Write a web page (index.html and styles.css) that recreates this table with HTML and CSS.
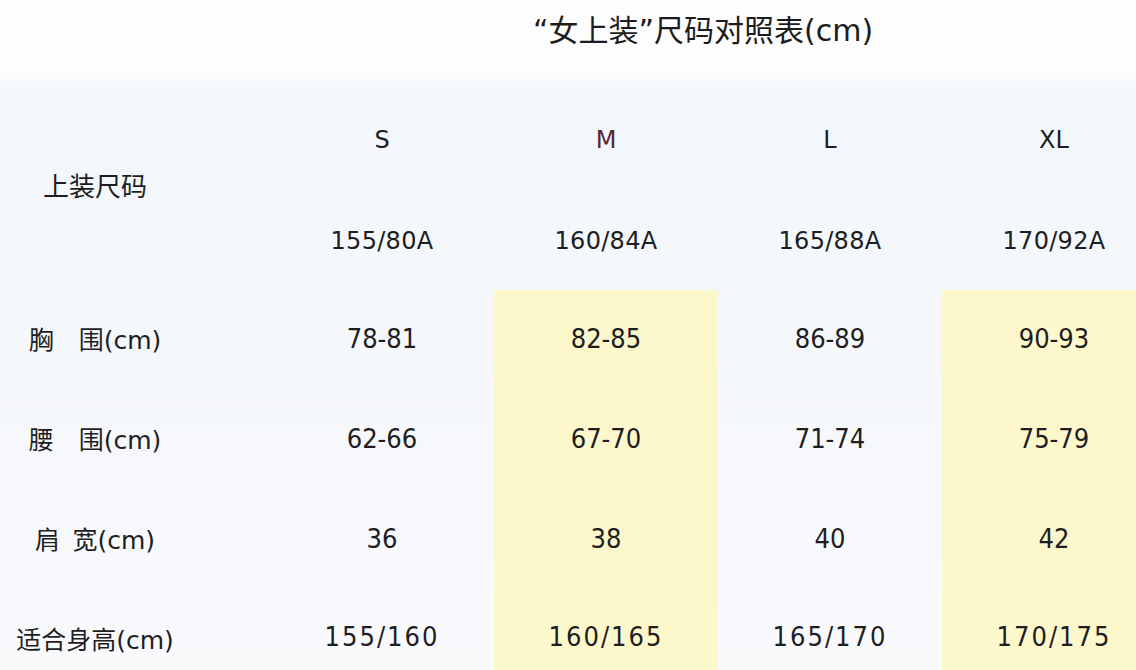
FILE: index.html
```html
<!DOCTYPE html>
<html lang="zh-CN">
<head>
<meta charset="utf-8">
<title>女上装尺码对照表</title>
<link rel="stylesheet" href="styles.css">
</head>
<body>
<div class="page">
  <header class="title-bar">
    <h1 class="title">“女上装”尺码对照表(cm)</h1>
  </header>
  <section class="chart">
    <div class="cell label label-head">上装尺码</div>
    <div class="cell size">S</div>
    <div class="cell size size-m">M</div>
    <div class="cell size">L</div>
    <div class="cell size">XL</div>
    <div class="cell spec">155/80A</div>
    <div class="cell spec">160/84A</div>
    <div class="cell spec">165/88A</div>
    <div class="cell spec">170/92A</div>

    <div class="cell label">胸　围(cm)</div>
    <div class="cell num">78-81</div>
    <div class="cell num hl">82-85</div>
    <div class="cell num">86-89</div>
    <div class="cell num hl">90-93</div>

    <div class="cell label">腰　围(cm)</div>
    <div class="cell num">62-66</div>
    <div class="cell num hl">67-70</div>
    <div class="cell num">71-74</div>
    <div class="cell num hl">75-79</div>

    <div class="cell label">肩&#8194;宽(cm)</div>
    <div class="cell num">36</div>
    <div class="cell num hl">38</div>
    <div class="cell num">40</div>
    <div class="cell num hl">42</div>

    <div class="cell label">适合身高(cm)</div>
    <div class="cell num wide">155/160</div>
    <div class="cell num wide hl">160/165</div>
    <div class="cell num wide">165/170</div>
    <div class="cell num wide hl">170/175</div>
  </section>
</div>
</body>
</html>
```

FILE: styles.css
```css
html, body {
  margin: 0;
  padding: 0;
  overflow: hidden;
  background: #fdfdfe;
}

.page {
  width: 1166px;
  font-family: "DejaVu Sans", "Noto Sans CJK SC", sans-serif;
  color: #1e1e22;
}

.title-bar {
  height: 88px;
  box-sizing: border-box;
  padding: 15px 30px 0 270px;
  background: linear-gradient(#fdfdfe 78%, #f4f8fb);
}

.title {
  margin: 0;
  font-weight: normal;
  font-size: 30px;
  line-height: 32px;
  text-align: center;
  color: #1c1c20;
}

.chart {
  display: grid;
  grid-template-columns: 270px repeat(4, 224px);
  grid-template-rows: 102px 100px repeat(4, 100px);
  background: linear-gradient(#f2f7fb, #f6f8fb 60%, #fafafd);
}

.cell {
  display: flex;
  align-items: center;
  justify-content: center;
}

.label {
  font-size: 25px;
  padding-right: 80px;
  padding-bottom: 4px;
  box-sizing: border-box;
}

.label-head {
  grid-row: span 2;
  font-size: 26px;
  padding-bottom: 10px;
}

.size {
  font-size: 24px;
  padding-top: 2px;
}

.size-m {
  color: #5a2433;
}

.spec {
  font-size: 24px;
  letter-spacing: 0.3px;
  padding-top: 2px;
}

.num {
  font-family: "DejaVu Sans Condensed", "DejaVu Sans", sans-serif;
  font-size: 27px;
  padding-bottom: 4px;
}

.wide {
  letter-spacing: 2px;
  padding-bottom: 8px;
}

.hl {
  background: #fdf8cc;
}
```
